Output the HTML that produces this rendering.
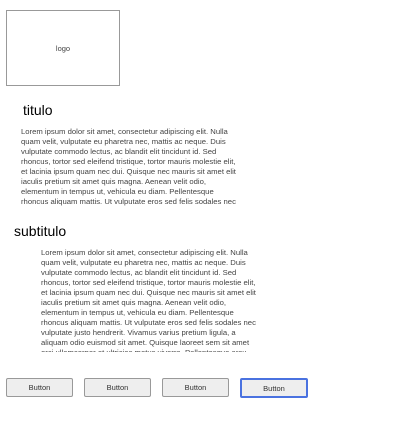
<!DOCTYPE html>
<html><head><style>
body{margin:0;width:415px;height:429px;background:#fff;font-family:"Liberation Sans",Arial,sans-serif;position:relative;overflow:hidden}
.a{position:absolute}
.logo{left:6px;top:10px;width:112px;height:74px;border:1px solid #999;font-size:7.5px;color:#444;display:flex;align-items:center;justify-content:center}
.h{font-size:14px;color:#000;white-space:nowrap}
.p{font-size:7.7px;line-height:10px;color:#444;white-space:nowrap}
.b{top:378px;width:65px;height:17px;border:1px solid #999;border-radius:2px;background:#eee;font-size:7.5px;color:#333;display:flex;align-items:center;justify-content:center}
</style></head><body>
<div class="a logo">logo</div>
<div class="a h" style="left:23px;top:102px">titulo</div>
<div class="a p" style="left:21px;top:127px">Lorem ipsum dolor sit amet, consectetur adipiscing elit. Nulla<br>quam velit, vulputate eu pharetra nec, mattis ac neque. Duis<br>vulputate commodo lectus, ac blandit elit tincidunt id. Sed<br>rhoncus, tortor sed eleifend tristique, tortor mauris molestie elit,<br>et lacinia ipsum quam nec dui. Quisque nec mauris sit amet elit<br>iaculis pretium sit amet quis magna. Aenean velit odio,<br>elementum in tempus ut, vehicula eu diam. Pellentesque<br>rhoncus aliquam mattis. Ut vulputate eros sed felis sodales nec</div>
<div class="a h" style="left:14px;top:223px">subtitulo</div>
<div class="a p" style="left:41px;top:248px;height:104px;overflow:hidden">Lorem ipsum dolor sit amet, consectetur adipiscing elit. Nulla<br>quam velit, vulputate eu pharetra nec, mattis ac neque. Duis<br>vulputate commodo lectus, ac blandit elit tincidunt id. Sed<br>rhoncus, tortor sed eleifend tristique, tortor mauris molestie elit,<br>et lacinia ipsum quam nec dui. Quisque nec mauris sit amet elit<br>iaculis pretium sit amet quis magna. Aenean velit odio,<br>elementum in tempus ut, vehicula eu diam. Pellentesque<br>rhoncus aliquam mattis. Ut vulputate eros sed felis sodales nec<br>vulputate justo hendrerit. Vivamus varius pretium ligula, a<br>aliquam odio euismod sit amet. Quisque laoreet sem sit amet<br>orci ullamcorper et ultricies metus viverra. Pellentesque arcu</div>
<div class="a b" style="left:6px">Button</div>
<div class="a b" style="left:84px">Button</div>
<div class="a b" style="left:162px">Button</div>
<div class="a b" style="left:240px;width:64px;height:16px;border:2px solid #4a72e0">Button</div>
</body></html>
